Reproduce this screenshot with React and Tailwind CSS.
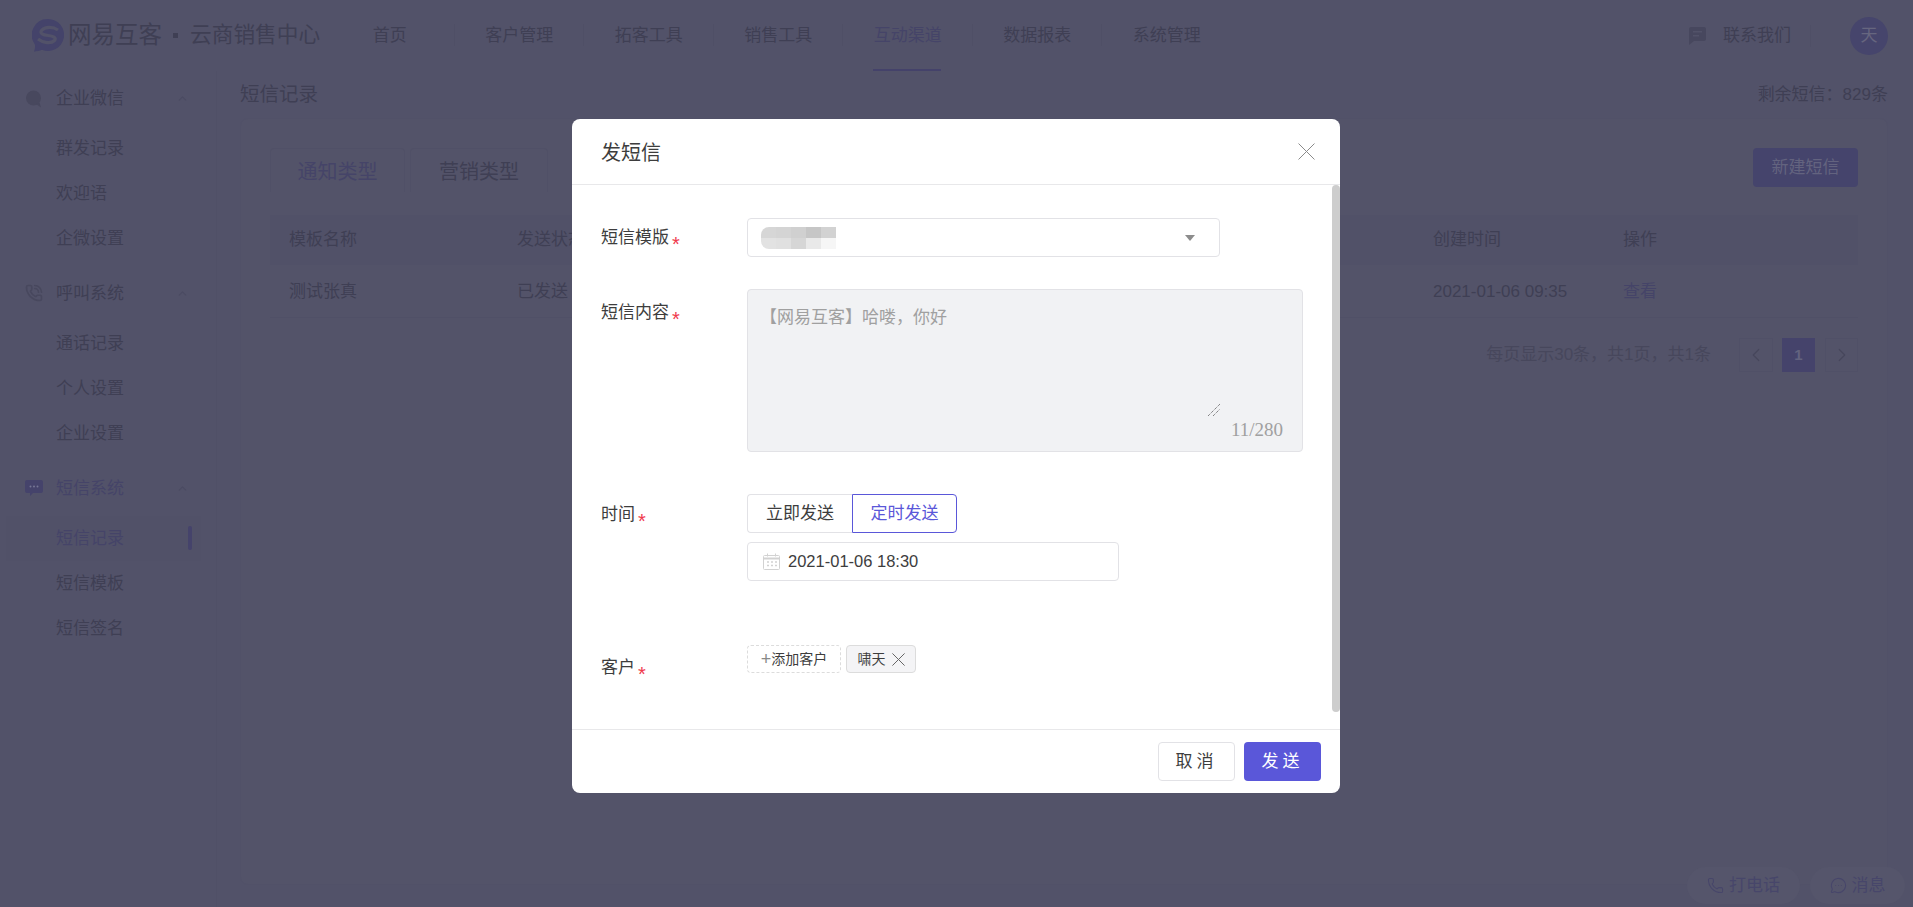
import React from 'react';
import { ChevronUp, ChevronLeft, ChevronRight, Phone, PhoneCall, MessageCircleMore } from 'lucide-react';

const FONT = "font-['Liberation_Sans','Noto_Sans_CJK_SC',sans-serif]";

const NAV = ['首页', '客户管理', '拓客工具', '销售工具', '互动渠道', '数据报表', '系统管理'];

const SIDE_GROUPS = [
  { title: '企业微信', icon: 'chat', items: ['群发记录', '欢迎语', '企微设置'] },
  { title: '呼叫系统', icon: 'phone', items: ['通话记录', '个人设置', '企业设置'] },
  { title: '短信系统', icon: 'sms', active: true, items: ['短信记录', '短信模板', '短信签名'] },
];

const BLUR_ROWS = [
  ['#d6d6d6', '#d4d4d4', '#d0d0d0', '#c6c6c6', '#d2d2d2'],
  ['#e2e2e2', '#e0e0e0', '#d6d6d6', '#e9e9e9', '#f6f6f6'],
];

const Logo = () => (
  <svg width="32" height="33" viewBox="0 0 32 33" className="shrink-0">
    <path d="M16 0a16 16 0 1 1-6 30.800c-2.500.9-5 1.600-8 1.900 1-2.600 1.300-5 .9-7.200A16 16 0 0 1 16 0z" fill="#44436a" />
    <path d="M26 11C21 7.500 13 7.500 9.500 11.500 7.500 14.500 11 16 16 16.500s9 2 6.500 5C19 25 11 24 6 20" fill="none" stroke="#525269" strokeWidth="3.200" />
  </svg>
);

const CloseGlyph = ({ size, color }) => (
  <svg width={size} height={size} viewBox="0 0 16 16" className="shrink-0" stroke={color} strokeWidth={16 / size}>
    <path d="M0.500 0.500L15.500 15.500M15.500 0.500L0.500 15.500" />
  </svg>
);

const SideIcon = ({ type }) => {
  if (type === 'sms') {
    return (
      <svg width="18" height="16" viewBox="0 0 18 16">
        <path d="M2 0h14a2 2 0 0 1 2 2v9a2 2 0 0 1-2 2H8l-3 3v-3H2a2 2 0 0 1-2-2V2a2 2 0 0 1 2-2z" fill="#45436b" />
        <circle cx="5.500" cy="6.500" r="1" fill="#767694" />
        <circle cx="9" cy="6.500" r="1" fill="#767694" />
        <circle cx="12.500" cy="6.500" r="1" fill="#767694" />
      </svg>
    );
  }
  if (type === 'phone') {
    return <PhoneCall size={18} strokeWidth={2.200} className="text-[#48485e]" />;
  }
  return (
    <svg width="18" height="18" viewBox="0 0 18 18">
      <circle cx="8.500" cy="8" r="7.500" fill="#48485e" />
      <path d="M11 14l5 3.500-1.500-5z" fill="#48485e" />
    </svg>
  );
};

const Header = () => (
  <header className="h-[71px] flex items-center shrink-0 pl-8 pr-[25px]">
    <div className="flex items-center w-[293px] shrink-0">
      <Logo />
      <span className="ml-[4px] text-[23.500px] text-[#3f3f54] whitespace-nowrap">网易互客</span>
      <span className="ml-[11px] mr-[12px] w-[5px] h-[5px] bg-[#3f3f54]" />
      <span className="text-[21.700px] text-[#3f3f54] whitespace-nowrap">云商销售中心</span>
    </div>
    <nav className="flex h-full">
      {NAV.map((item, i) => (
        <div key={item} className="relative w-[129.500px] flex items-center justify-center text-[17px] text-[#3f3f54]">
          <span className={item === '互动渠道' ? 'text-[#454468]' : ''}>{item}</span>
          {i < NAV.length - 1 && <span className="absolute right-0 top-[24px] h-[22px] w-px bg-[#4f4f66]" />}
          {item === '互动渠道' && <span className="absolute bottom-0 left-[30px] w-[68px] h-[2px] bg-[#44426a]" />}
        </div>
      ))}
    </nav>
    <div className="ml-auto flex items-center">
      <svg width="17" height="18" viewBox="0 0 17 18" className="-ml-[2px]">
        <path d="M2 0h13a2 2 0 0 1 2 2v10a2 2 0 0 1-2 2H5l-5 4V2a2 2 0 0 1 2-2z" fill="#47475e" />
        <rect x="4" y="4" width="9" height="1.500" fill="#525269" />
        <rect x="4" y="8" width="6" height="1.500" fill="#525269" />
      </svg>
      <span className="ml-[17px] text-[17px] text-[#3f3f54]">联系我们</span>
      <span className="ml-[19px] mr-[39px] h-[22px] w-px bg-[#4f4f66]" />
      <div className="w-[38px] h-[38px] rounded-full bg-[#46456c] flex items-center justify-center text-[17px] text-[#66667f]">天</div>
    </div>
  </header>
);

const Sidebar = () => (
  <aside className="w-[217px] shrink-0 pt-[5px] border-r border-[#505067]">
    {SIDE_GROUPS.map(group => (
      <div key={group.title} className="mb-[9px]">
        <div className="h-[45px] flex items-center pl-[25px] pr-[25px] mb-[5px]">
          <span className="w-[31px] shrink-0"><SideIcon type={group.icon} /></span>
          <span className={`text-[17px] ${group.active ? 'text-[#454468]' : 'text-[#3f3f54]'}`}>{group.title}</span>
          <ChevronUp size={13} className="ml-auto mr-[2px] text-[#4b4b62]" />
        </div>
        {group.items.map(item => {
          const on = item === '短信记录';
          return (
            <div key={item} className={`relative ml-[6px] w-[195px] h-[45.300px] flex items-center pl-[50px] text-[17px] ${on ? 'text-[#454468] bg-[#515168]' : 'text-[#3f3f54]'}`}>
              {item}
              {on && <span className="absolute left-[182px] top-[10px] h-[24px] w-[4px] rounded-sm bg-[#45436b]" />}
            </div>
          );
        })}
      </div>
    ))}
  </aside>
);

const Main = () => (
  <main className="flex-1 min-w-0 flex flex-col pl-[23px] pr-[25px] pb-[22px]">
    <div className="h-[47px] flex items-center justify-between shrink-0">
      <span className="text-[19.500px] text-[#3f3f54]">短信记录</span>
      <span className="text-[17px] text-[#3f3f54]">剩余短信：829条</span>
    </div>
    <div className="flex-1 rounded-lg bg-[#535369] border border-[#515168] pt-[29px] px-[29px]">
      <div className="flex items-start justify-between">
        <div className="flex gap-[5px]">
          <div className="w-[135px] h-[44px] pt-[2px] border border-b-0 border-[#505067] rounded-t flex items-center justify-center text-[20px] text-[#454468]">通知类型</div>
          <div className="w-[138px] h-[44px] pt-[2px] border border-b-0 border-[#505067] rounded-t flex items-center justify-center text-[20px] text-[#3f3f54]">营销类型</div>
        </div>
        <div className="w-[105px] h-[39px] rounded bg-[#45446c] flex items-center justify-center text-[17px] text-[#63637f]">新建短信</div>
      </div>
      <div className="mt-[23px] h-[50px] grid grid-cols-[228px_916px_190px_1fr] items-center pl-[19px] bg-[#515168] text-[17px] text-[#3f3f54]">
        <span>模板名称</span>
        <span>发送状态</span>
        <span>创建时间</span>
        <span>操作</span>
      </div>
      <div className="h-[53px] pt-[2px] grid grid-cols-[228px_916px_190px_1fr] items-center pl-[19px] border-b border-[#505067] text-[17px] text-[#3f3f54]">
        <span>测试张真</span>
        <span>已发送</span>
        <span className="whitespace-nowrap">2021-01-06 09:35</span>
        <span className="text-[#454468]">查看</span>
      </div>
      <div className="mt-[20px] flex items-center justify-end">
        <span className="mr-[28px] text-[17px] text-[#47475c]">每页显示30条，共1页，共1条</span>
        <span className="w-[34px] h-[34px] border border-[#505067] flex items-center justify-center text-[#47475c]"><ChevronLeft size={22} strokeWidth={1.300} /></span>
        <span className="ml-[9px] w-[33px] h-[34px] bg-[#45436b] flex items-center justify-center text-[15px] font-bold text-[#63637f]">1</span>
        <span className="ml-[10px] w-[33px] h-[34px] border border-[#505067] flex items-center justify-center text-[#47475c]"><ChevronRight size={22} strokeWidth={1.300} /></span>
      </div>
    </div>
  </main>
);

const FloatPills = () => (
  <div className="absolute right-[8px] bottom-[3px] flex gap-[10px] text-[17px] text-[#47466a]">
    <div className="w-[113px] h-[37px] rounded-full bg-[#55556b] flex items-center justify-center gap-[5px]">
      <Phone size={17} strokeWidth={1.500} />
      <span>打电话</span>
    </div>
    <div className="w-[95px] h-[37px] rounded-full bg-[#55556b] flex items-center justify-center gap-[5px]">
      <MessageCircleMore size={17} strokeWidth={1.500} />
      <span>消息</span>
    </div>
  </div>
);

const FormRow = ({ label, className = '', labelClass = '', children }) => (
  <div className={`flex items-start ${className}`}>
    <div className={`w-[146px] shrink-0 flex items-center h-[39px] text-[17px] text-[#3d3d3d] ${labelClass}`}>
      <span>{label}</span>
      <span className="ml-[3px] mt-[12px] text-[20px] leading-none text-[#f0394d]">*</span>
    </div>
    <div className="flex-1 min-w-0">{children}</div>
  </div>
);

const Calendar = () => (
  <svg width="17" height="17" viewBox="0 0 17 17" className="shrink-0" fill="none" stroke="#d2d2d2">
    <rect x="0.500" y="2.500" width="16" height="14" rx="1" />
    <path d="M1 5.500h15" strokeWidth="2" />
    <path d="M4.500 0.500v3M12.500 0.500v3" />
    <path d="M4 9h2M8 9h2M12 9h2M4 12.500h2M8 12.500h2M12 12.500h2" strokeWidth="1.500" />
  </svg>
);

const Modal = () => (
  <div className="absolute left-[572px] top-[119px] w-[768px] h-[674px] flex flex-col bg-white rounded-lg overflow-hidden">
    <div className="h-[66px] shrink-0 flex items-center justify-between pl-[29px] pr-[25px] border-b border-[#e8e8ea]">
      <span className="mt-[3px] text-[20px] text-[#3d3d3d]">发短信</span>
      <CloseGlyph size={17} color="#8a8a8a" />
    </div>
    <div className="relative flex-1 min-h-0 pt-[33px] pl-[29px] pr-[37px]">
      <span className="absolute right-0 top-0 w-[8px] h-[527px] rounded-sm bg-[#cdcdcd]" />
      <FormRow label="短信模版">
        <div className="w-[473px] h-[39px] border border-[#e2e2e6] rounded flex items-center pl-[13px] pr-[24px]">
          <div className="flex flex-col rounded-l-lg overflow-hidden">
            {BLUR_ROWS.map((row, r) => (
              <div key={r} className="flex">
                {row.map((c, i) => <span key={i} className="block w-[15px] h-[11px]" style={{ background: c }} />)}
              </div>
            ))}
          </div>
          <span className="ml-auto w-0 h-0 border-x-[5px] border-x-transparent border-t-[6px] border-t-[#8c8c8c]" />
        </div>
      </FormRow>
      <FormRow label="短信内容" className="mt-[32px]" labelClass="mt-[4px]">
        <div className="relative w-[556px] h-[163px] bg-[#f1f2f4] border border-[#e2e2e6] rounded-sm pl-[12px] pt-[17px] text-[17px] leading-[21px] text-[#a0a0a0]">
          【网易互客】哈喽，你好
          <svg width="14" height="14" viewBox="0 0 14 14" className="absolute left-[459px] top-[113px]" stroke="#555" strokeDasharray="1 1">
            <path d="M1 13L13 1M6 13L13 6" />
          </svg>
          <span className="absolute right-[19px] bottom-[12px] font-['Liberation_Serif',serif] text-[19px] leading-none text-[#a0a0a0]">11/280</span>
        </div>
      </FormRow>
      <FormRow label="时间" className="mt-[42px]" labelClass="mt-[1px]">
        <div className="flex">
          <div className="w-[105px] h-[39px] border border-r-0 border-[#e2e2e6] rounded-l flex items-center justify-center text-[17px] text-[#3d3d3d]">立即发送</div>
          <div className="w-[105px] h-[39px] border border-[#5a57d9] rounded-r flex items-center justify-center text-[17px] text-[#5a57d9]">定时发送</div>
        </div>
        <div className="mt-[9px] w-[372px] h-[39px] border border-[#e2e2e6] rounded flex items-center pl-[15px]">
          <Calendar />
          <span className="ml-[8px] text-[16.500px] text-[#3d3d3d]">2021-01-06 18:30</span>
        </div>
      </FormRow>
      <FormRow label="客户" className="mt-[64px]" labelClass="mt-[3px]">
        <div className="flex gap-[5px]">
          <div className="w-[94px] h-[28px] border border-dashed border-[#dcdcdc] rounded-sm flex items-center justify-center text-[14px] text-[#3d3d3d]">
            <span className="text-[#888] text-[18px] font-light leading-none">+</span>添加客户
          </div>
          <div className="w-[70px] h-[28px] border border-[#dcdcdc] rounded-sm bg-[#f4f4f6] flex items-center justify-center gap-[6px] text-[14px] text-[#3d3d3d]">
            <span>啸天</span>
            <CloseGlyph size={13} color="#666" />
          </div>
        </div>
      </FormRow>
    </div>
    <div className="h-[64px] shrink-0 flex items-start justify-end gap-[9px] pt-[12px] pr-[19px] border-t border-[#e8e8ea]">
      <div className="w-[77px] h-[39px] border border-[#e2e2e6] rounded flex items-center justify-center text-[17px] tracking-[4px] text-[#3d3d3d]">取消</div>
      <div className="w-[77px] h-[39px] rounded bg-[#5a57d9] flex items-center justify-center text-[17px] tracking-[4px] text-white">发送</div>
    </div>
  </div>
);

export default function App() {
  return (
    <div className={`relative w-full h-[907px] overflow-hidden flex flex-col bg-[#525269] ${FONT}`}>
      <Header />
      <div className="flex flex-1 min-h-0">
        <Sidebar />
        <Main />
      </div>
      <FloatPills />
      <Modal />
    </div>
  );
}
